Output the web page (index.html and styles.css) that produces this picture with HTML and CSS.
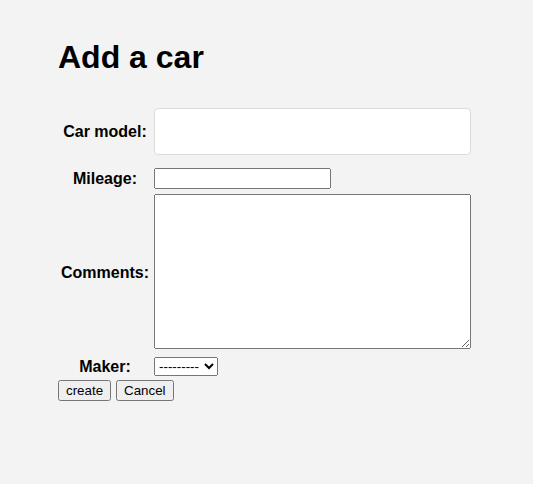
FILE: index.html
```html
<!DOCTYPE html>
<html>
<head>
<meta charset="utf-8">
<title>Add a car</title>
<link rel="stylesheet" href="styles.css">
</head>
<body>
<div class="page">
  <h1 class="title">Add a car</h1>
  <form class="car-form">
    <table class="form-table">
      <tr>
        <th class="label">Car model:</th>
        <td><input type="text" class="text-input"></td>
      </tr>
      <tr>
        <th class="label">Mileage:</th>
        <td><input type="number" class="num-input"></td>
      </tr>
      <tr>
        <th class="label">Comments:</th>
        <td><textarea class="comments" cols="40" rows="10"></textarea></td>
      </tr>
      <tr>
        <th class="label">Maker:</th>
        <td><select class="maker"><option>---------</option></select></td>
      </tr>
    </table>
    <div class="actions">
      <button type="submit" class="btn">create</button>
      <button type="button" class="btn">Cancel</button>
    </div>
  </form>
</div>
</body>
</html>
```
FILE: styles.css
```css
html, body {
  margin: 0;
  background: #f3f3f3;
}
body {
  font-family: "Liberation Sans", Arial, sans-serif;
  font-size: 16px;
  color: #000;
}
.page {
  padding: 18px 58px;
}
.title {
  font-size: 32px;
  font-weight: bold;
  margin: 21px 0 21px;
}
.form-table {
  border-spacing: 2px;
}
.form-table th,
.form-table td {
  padding: 1px;
}
.form-table th {
  padding-right: 2px;
}
.label {
  font-weight: bold;
  text-align: center;
  vertical-align: middle;
}
.text-input {
  display: block;
  box-sizing: border-box;
  width: 317px;
  height: 47px;
  margin: 8px 0 9px;
  padding: 12px 20px;
  border: 1px solid #dcdcdc;
  border-radius: 4px;
  background: #fff;
  font-family: "Liberation Sans", Arial, sans-serif;
}
.num-input {
  display: block;
  box-sizing: border-box;
  width: 177px;
  height: 21px;
  font-family: "Liberation Sans", Arial, sans-serif;
  font-size: 13.33px;
}
.comments {
  display: block;
  box-sizing: border-box;
  width: 317px;
  height: 155px;
  margin: 1px 0 4px;
}
.maker {
  display: block;
  box-sizing: border-box;
  width: 64px;
  height: 19px;
  font-family: "Liberation Sans", Arial, sans-serif;
  font-size: 13.33px;
}
.actions {
  display: flex;
  gap: 5px;
  margin-top: 1px;
}
.btn {
  font-family: "Liberation Sans", Arial, sans-serif;
  font-size: 13.33px;
  height: 21px;
  padding: 1px 6px;
}
```
